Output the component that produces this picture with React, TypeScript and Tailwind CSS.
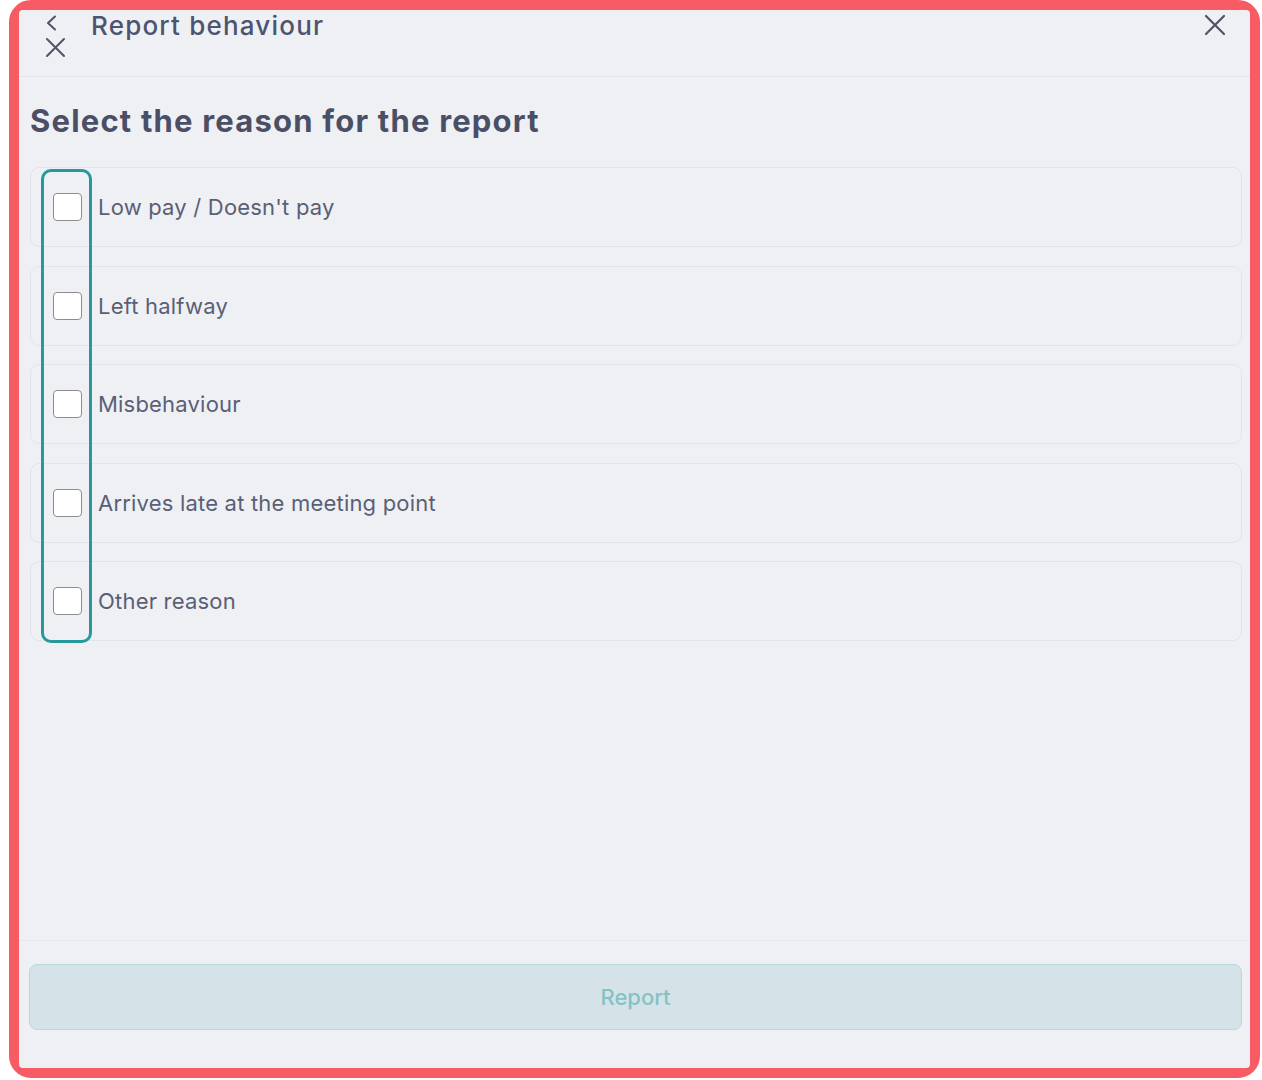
import React from 'react';

const reasons = [
  'Low pay / Doesn\'t pay',
  'Left halfway',
  'Misbehaviour',
  'Arrives late at the meeting point',
  'Other reason',
];

const ReasonRow: React.FC<{ label: string }> = ({ label }) => (
  <label className="flex h-[80px] items-center rounded-[9px] border border-[#e2e4e9] pl-[22px]">
    <span className="h-[28px] w-[29px] shrink-0 rounded-[4px] border-[1.5px] border-[#8c8d91] bg-white" />
    <span className="ml-[16px] text-[22px] leading-none tracking-[0.2px] text-[#595f76]">{label}</span>
  </label>
);

const App: React.FC = () => {
  return (
    <div className="h-[1080px] w-[1262px] bg-white font-['Inter',sans-serif]">
      <div className="ml-[9px] h-[1078px] w-[1251px] rounded-[22px] border-[10px] border-[#f75c64]">
        <div className="flex h-full flex-col rounded-[4px] bg-[#eff0f4]">
          {/* Header */}
          <div className="relative flex h-[67px] shrink-0 items-start border-b border-[#e3e5ea] pl-[26px]">
            <div className="flex w-[21px] flex-col items-start pt-[5px] text-[#4d5369]">
              <svg width="12" height="16" viewBox="0 0 12 16" fill="none">
                <path d="M10 1.5 L3 8 L10 14.5" stroke="currentColor" strokeWidth="2" strokeLinecap="round" strokeLinejoin="round" />
              </svg>
              <svg width="21" height="21" viewBox="0 0 21 21" fill="none" className="mt-[6px]">
                <path d="M2 2 L19 19 M19 2 L2 19" stroke="currentColor" strokeWidth="2" strokeLinecap="round" />
              </svg>
            </div>
            <h1 className="ml-[25px] text-[26px] font-medium leading-[31px] tracking-[1.2px] text-[#4d5470]">Report behaviour</h1>
            <button className="absolute right-[24px] top-[4px] text-[#4d5369]">
              <svg width="22" height="22" viewBox="0 0 22 22" fill="none">
                <path d="M2 2 L20 20 M20 2 L2 20" stroke="currentColor" strokeWidth="2.2" strokeLinecap="round" />
              </svg>
            </button>
          </div>

          {/* Content */}
          <div className="flex-1 pl-[11px] pr-[8px]">
            <h2 className="mt-[25px] text-[31px] font-bold leading-[37px] tracking-[1.2px] text-[#4a4f66]">Select the reason for the report</h2>
            <div className="relative mt-[28px] flex flex-col gap-[18.5px]">
              {reasons.map((r) => (
                <ReasonRow key={r} label={r} />
              ))}
              {/* highlight annotation */}
              <div className="pointer-events-none absolute left-[11px] top-[2px] h-[474px] w-[51px] rounded-[10px] border-[3px] border-[#25999c]" />
            </div>
          </div>

          {/* Footer */}
          <div className="shrink-0 border-t border-[#e5e7ec] pb-[38px] pl-[10px] pr-[8px] pt-[23px]">
            <button className="flex h-[66px] w-full items-center justify-center rounded-[8px] border border-[#b6dadb] bg-[#d5e2e8] text-[22px] font-medium text-[#84c2c4]">
              Report
            </button>
          </div>
        </div>
      </div>
    </div>
  );
};

export default App;
